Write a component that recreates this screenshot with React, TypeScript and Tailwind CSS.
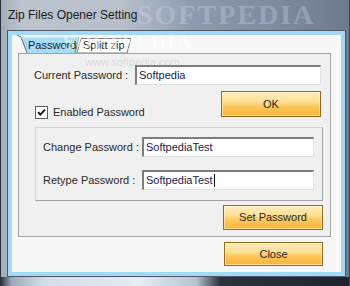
import React from "react";

function Field({ w, value, caret }: { w: string; value: string; caret?: boolean }) {
  return (
    <div
      className={`${w} h-[20px] bg-white border-t-2 border-l-2 border-b border-r border-t-[#7d7d7d] border-l-[#7d7d7d] border-b-[#e2e2e2] border-r-[#e2e2e2] pl-[2px] flex items-center text-[11px] text-[#1b1b4d] leading-none`}
    >
      <span>{value}</span>
      {caret ? <span className="ml-[1px] w-[1px] h-[13px] bg-black" /> : null}
    </div>
  );
}

function Btn({ cls, children }: { cls: string; children: React.ReactNode }) {
  return (
    <div
      className={`${cls} flex items-center justify-center border border-[#976b1c] bg-[linear-gradient(180deg,#ffedbd_0%,#fedf95_40%,#fcc75b_60%,#f8b43a_100%)] shadow-[inset_0_0_0_1px_rgba(255,250,225,0.55)] text-[11px] text-[#262626] leading-none`}
    >
      {children}
    </div>
  );
}

export default function App() {
  return (
    <div className="relative w-[350px] h-[286px] overflow-hidden flex flex-col border-l border-r border-l-[#27303b] border-r-[#3a4350] bg-[linear-gradient(90deg,#a3adb9_0%,#bcc4ce_6%,#b6bfca_35%,#8e9baf_55%,#7d8a9d_80%,#6f7b8c_100%)] font-['Liberation_Sans',Arial,sans-serif]">
      {/* watermark behind title */}
      <div className="pointer-events-none absolute left-[136px] top-[1px] font-['Liberation_Serif',serif] font-bold text-[28px] tracking-[2px] text-[rgba(215,228,248,0.3)] leading-none">
        SOFTPEDIA
      </div>

      {/* title bar */}
      <div className="relative h-[30px] shrink-0 flex items-center pl-[7px] pb-[1px] text-[12px] text-[#1a1a1a]">
        Zip Files Opener Setting
      </div>

      {/* client frame */}
      <div className="ml-[6px] w-[339px] h-[247px] shrink-0 border border-[#4f5966] bg-[#f7f7f7]">
        <div className="w-full h-full border-4 border-[#a3d9f4] flex flex-col">
          {/* tab strip */}
          <div className="relative h-[18px] shrink-0">
            <svg className="absolute left-0 top-0" width="329" height="18" viewBox="0 0 329 18">
              <polygon points="9,2 67,2 63,18 15,18" fill="#a6dcf6" />
              <polyline points="5,0 9,2 15,18" fill="none" stroke="#6c6c6c" strokeWidth="1" />
              <line x1="9" y1="2" x2="67" y2="2" stroke="#e8f6fd" strokeWidth="1" />
              <polygon points="69,3.5 119,3.5 115,18 65,18" fill="#ffffff" stroke="#7a7a7a" strokeWidth="1" />
              <line x1="67" y1="2" x2="63" y2="18" stroke="#6c6c6c" strokeWidth="1" />
            </svg>
            <div className="relative flex pt-[4px] text-[11px] leading-[13px] text-[#1c1c1c]">
              <span className="ml-[16px] w-[50px]">Password</span>
              <span className="ml-[5px]">Splitt zip</span>
            </div>
          </div>

          {/* tab panel */}
          <div className="ml-[6px] w-[313px] h-[184px] shrink-0 border border-[#a3a3a3] bg-[#f0f0f0] flex flex-col pl-[15px] text-[11px] text-[#2a2a2a] leading-none">
            <div className="mt-[11px] flex items-center">
              <span className="w-[101px]">Current Password :</span>
              <Field w="w-[186px]" value="Softpedia" />
            </div>

            <div className="mt-[6px] h-[28px] flex justify-between pr-[9px]">
              <div className="self-end ml-[1px] flex items-center">
                <div className="w-[13px] h-[13px] bg-white border border-[#5e5e5e] flex items-center justify-center">
                  <svg width="9" height="9" viewBox="0 0 9 9">
                    <path d="M1 4.2 L3.3 6.6 L8 1.6" fill="none" stroke="#111" strokeWidth="1.8" />
                  </svg>
                </div>
                <span className="ml-[5px]">Enabled Password</span>
              </div>
              <Btn cls="w-[100px] h-[26px]">OK</Btn>
            </div>

            <div className="mt-[8px] ml-[1px] w-[288px] h-[74px] border border-t-[#d2d2d2] border-l-[#d2d2d2] border-b-[#a2a2a2] border-r-[#a2a2a2] flex flex-col pl-[7px]">
              <div className="mt-[9px] flex items-center">
                <span className="w-[99px]">Change Password :</span>
                <Field w="w-[172px]" value="SoftpediaTest" />
              </div>
              <div className="mt-[13px] flex items-center">
                <span className="w-[99px]">Retype Password :</span>
                <Field w="w-[172px]" value="SoftpediaTest" caret />
              </div>
            </div>

            <div className="mt-[4px] flex justify-end pr-[7px]">
              <Btn cls="w-[100px] h-[25px]">Set Password</Btn>
            </div>
          </div>

          <div className="mt-[5px] flex justify-end pr-[18px]">
            <Btn cls="w-[99px] h-[24px]">Close</Btn>
          </div>
        </div>
      </div>

      {/* bottom frame */}
      <div className="flex-1 bg-[linear-gradient(90deg,#2d3641_0%,#9aa8b8_3%,#d3dde8_12%,#e4ecf4_40%,#b7c4d3_56%,#2b333e_63%,#1c232c_100%)]" />

      {/* watermarks over the client area */}
      <div className="pointer-events-none absolute left-[62px] top-[32px] font-['Liberation_Serif',serif] font-bold text-[21px] tracking-[1px] text-[rgba(255,255,255,0.5)] leading-none">
        SOFTPEDIA
      </div>
      <div className="pointer-events-none absolute left-[84px] top-[57px] text-[11px] text-[rgba(160,160,160,0.3)] leading-none">
        www.softpedia.com
      </div>
    </div>
  );
}
